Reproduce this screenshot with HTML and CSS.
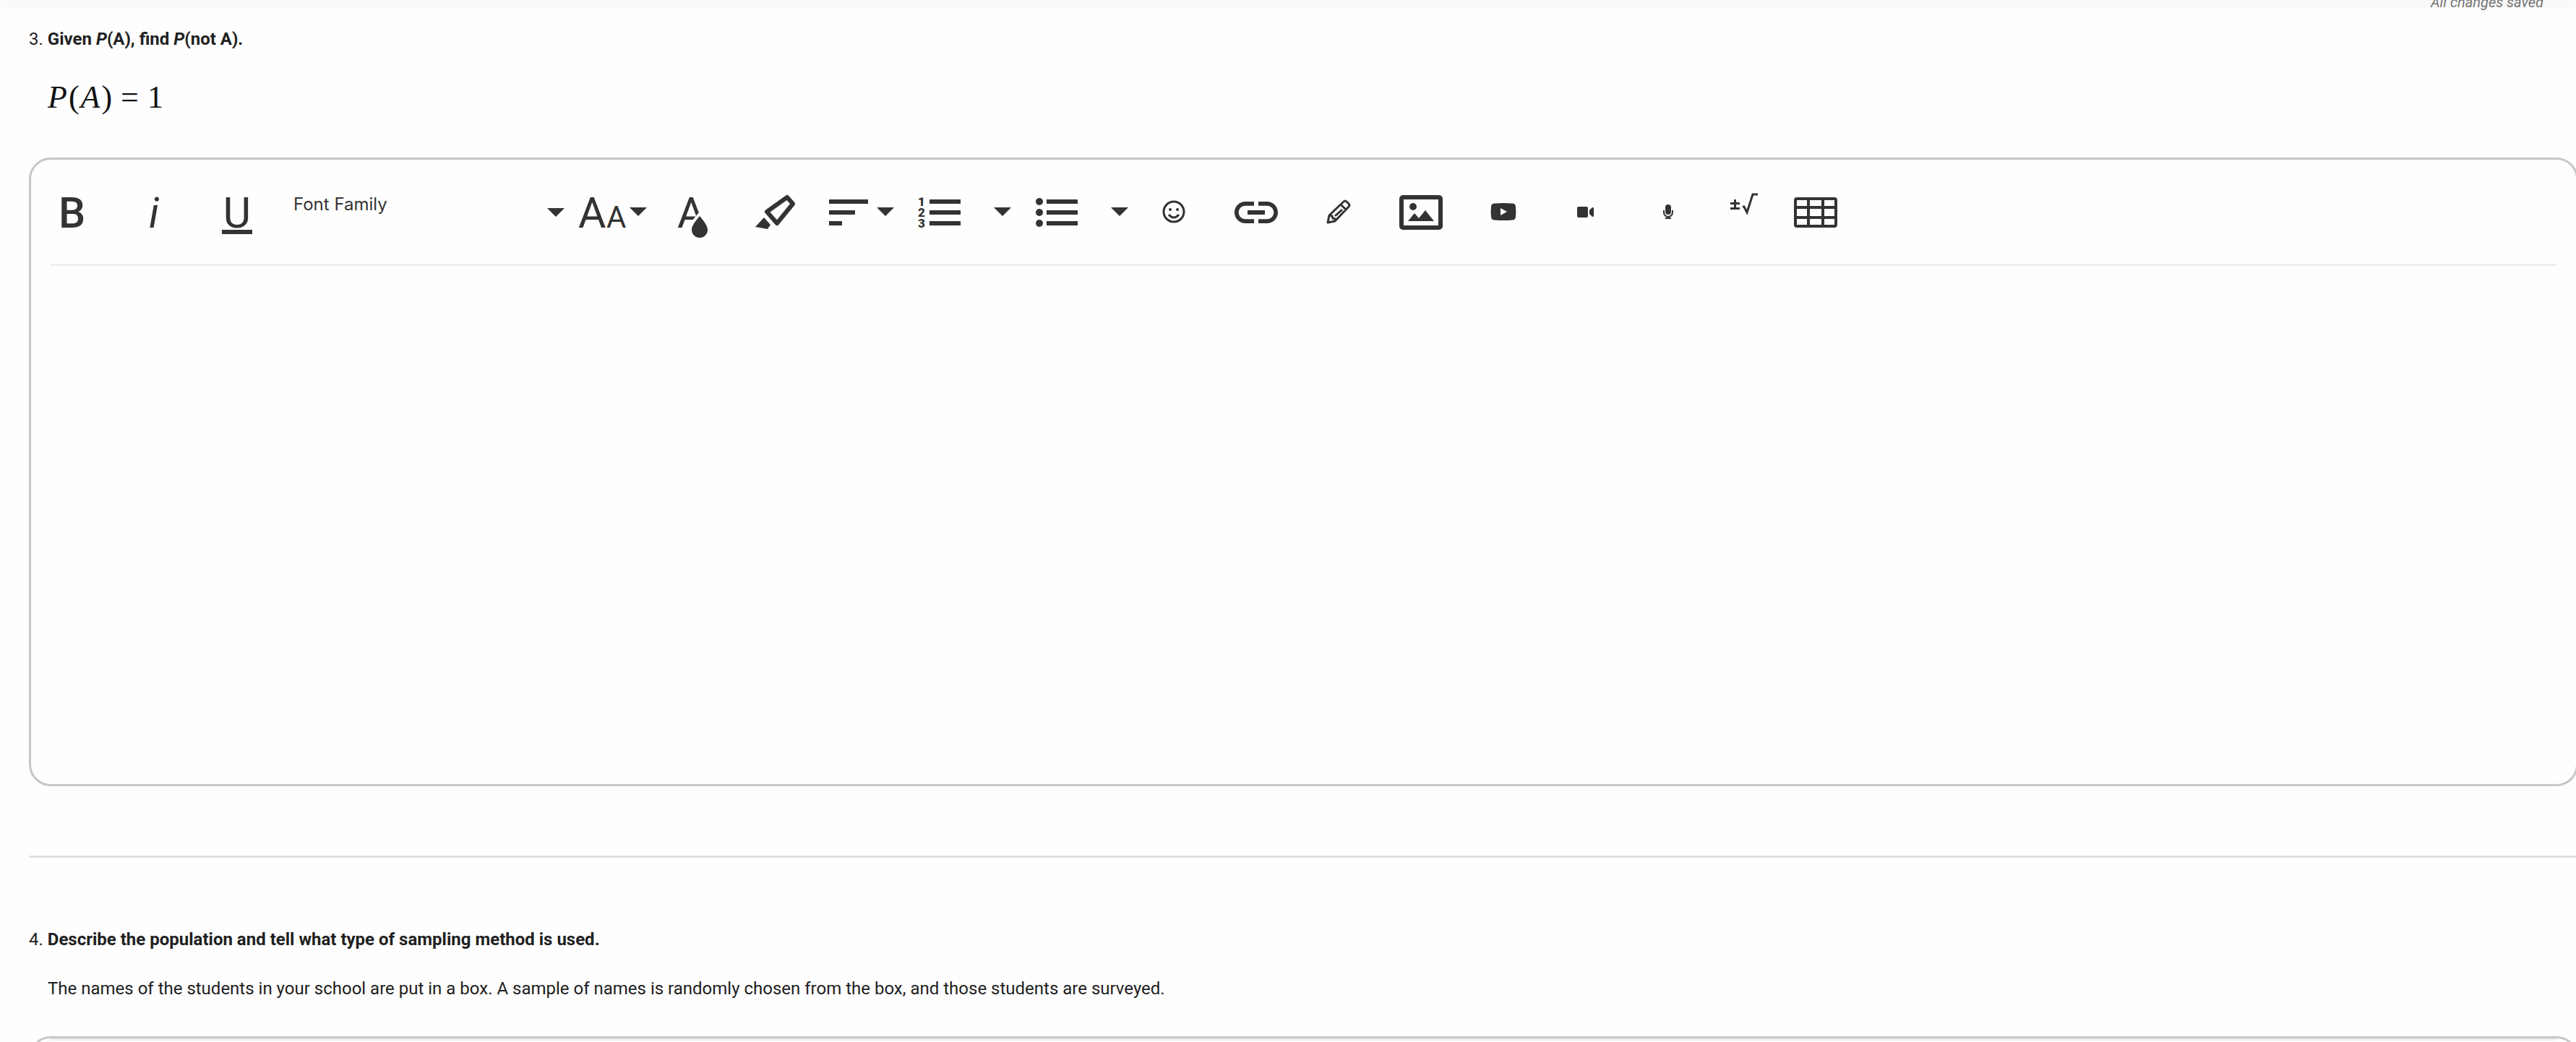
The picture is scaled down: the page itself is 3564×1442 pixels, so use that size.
FILE: index.html
```html
<!DOCTYPE html>
<html lang="en">
<head>
  <meta charset="UTF-8">
  <meta name="viewport" content="width=device-width, initial-scale=1">
  <title>Assignment</title>
  <link rel="stylesheet" href="styles.css">
</head>
<body>
<header class="topbar"></header>
<main class="page">
  <p class="status">All changes saved</p>

  <section class="question">
    <h2 class="prompt"><span class="number">3.</span> Given <em>P</em>(A), find <em>P</em>(not A).</h2>
    <p class="formula"><i>P</i><span>(</span><i>A</i><span>)</span><span class="equals">=</span><span>1</span></p>

    <div class="editor">
      <div class="toolbar">
        <button class="tool" type="button" aria-label="Bold">
          <svg width="72" height="72" viewBox="0 0 72 72"><text class="glyph strong" x="17" y="57">B</text></svg>
        </button>
        <button class="tool" type="button" aria-label="Italic">
          <svg width="72" height="72" viewBox="0 0 72 72"><text class="glyph slanted" x="28" y="57">i</text></svg>
        </button>
        <button class="tool" type="button" aria-label="Underline">
          <svg width="72" height="72" viewBox="0 0 72 72"><text class="glyph" x="36" y="57" text-anchor="middle">U</text><path d="M15 60h42v6H15z"/></svg>
        </button>
        <div class="font-picker">
          <select class="font-select" aria-label="Font Family">
            <option>Font Family</option>
            <option>Arial</option>
            <option>Georgia</option>
          </select>
          <svg class="caret" width="24" height="12" viewBox="0 0 24 12"><path d="M0 0h24L12 12z"/></svg>
        </div>
        <button class="tool" type="button" aria-label="Font size">
          <svg width="114" height="72" viewBox="0 0 114 72"><text class="glyph" x="13" y="57">A</text><text class="glyph small" x="52" y="57">A</text><path d="M84 29h24L96 41z"/></svg>
        </button>
        <button class="tool" type="button" aria-label="Text color">
          <svg width="114" height="72" viewBox="0 0 114 72"><text class="glyph" x="36" y="57">A</text><path class="drop" d="M67 41c-5 6-11 13-11 19a11 11 0 0 0 22 0c0-6-6-13-11-19z"/></svg>
        </button>
        <button class="tool" type="button" aria-label="Highlight">
          <svg width="114" height="72" viewBox="0 0 114 72"><path d="M30 56l12-13 9 10-4 6z"/><path class="line thick" d="M46 35l28-20 8 9-22 27z"/></svg>
        </button>
        <button class="tool" type="button" aria-label="Align">
          <svg width="114" height="72" viewBox="0 0 114 72"><path d="M18 18h54v6H18zM18 33h36v6H18zM18 48h18v6H18zM84 29h24L96 41z"/></svg>
        </button>
        <button class="tool wide" type="button" aria-label="Numbered list">
          <svg width="162" height="72" viewBox="0 0 162 72"><text class="digit" x="27" y="27">1</text><text class="digit" x="27" y="42">2</text><text class="digit" x="27" y="57">3</text><path d="M43 18h43v6H43zM43 33h43v6H43zM43 48h43v6H43zM132 29h24l-12 12z"/></svg>
        </button>
        <button class="tool wide" type="button" aria-label="Bulleted list">
          <svg width="162" height="72" viewBox="0 0 162 72"><circle cx="33" cy="21" r="5"/><circle cx="33" cy="36" r="5"/><circle cx="33" cy="51" r="5"/><path d="M43 18h43v6H43zM43 33h43v6H43zM43 48h43v6H43zM132 29h24l-12 12z"/></svg>
        </button>
        <button class="tool" type="button" aria-label="Emoji">
          <svg width="72" height="72" viewBox="0 0 72 72"><circle class="line" cx="36" cy="35" r="14"/><circle cx="31" cy="32" r="2"/><circle cx="41" cy="32" r="2"/><path class="line" d="M29 39q7 8 14 0"/></svg>
        </button>
        <button class="tool" type="button" aria-label="Link">
          <svg width="72" height="72" viewBox="0 0 24 24"><path d="M3.9 12c0-1.71 1.39-3.1 3.1-3.1h4V7H7c-2.76 0-5 2.24-5 5s2.24 5 5 5h4v-1.9H7c-1.71 0-3.1-1.39-3.1-3.1zM8 13h8v-2H8v2zm9-6h-4v1.9h4c1.71 0 3.1 1.39 3.1 3.1s-1.39 3.1-3.1 3.1h-4V17h4c2.76 0 5-2.24 5-5s-2.24-5-5-5z"/></svg>
        </button>
        <button class="tool" type="button" aria-label="Draw">
          <svg width="72" height="72" viewBox="0 0 72 72"><path class="line" d="M21 50l2-10 20-19q2-2 4 0l3 3q2 2 0 4L31 48zM39 25l7 7M24 40l3 1 1 3 3 1 1 2M31 41l10-9"/></svg>
        </button>
        <button class="tool" type="button" aria-label="Image">
          <svg width="72" height="72" viewBox="0 0 72 72"><rect class="line frame" x="9" y="15" width="54" height="42" rx="2"/><circle cx="25" cy="28" r="5"/><path d="M18 48l9-11 6 7 9-11 12 15z"/></svg>
        </button>
        <button class="tool" type="button" aria-label="YouTube">
          <svg width="72" height="72" viewBox="0 0 72 72"><path fill-rule="evenodd" d="M24 23.500q12-1 24 0 5 0 5 5 .8 6.500 0 13 0 5-5 5-12 1-24 0-5 0-5-5-.8-6.500 0-13 0-5 5-5zM32 30v10l9-5z"/></svg>
        </button>
        <button class="tool" type="button" aria-label="Video">
          <svg width="72" height="72" viewBox="0 0 72 72"><rect x="24" y="28" width="15" height="15" rx="2"/><path d="M41 33l4-4q2 0 2 1v11q0 1-2 1l-4-4z"/></svg>
        </button>
        <button class="tool" type="button" aria-label="Record audio">
          <svg width="72" height="72" viewBox="0 0 72 72"><rect x="32" y="25" width="8" height="14" rx="4"/><path class="line thin" d="M30 33v3a6 6 0 0 0 12 0v-3M36 42v3M32 44h8"/></svg>
        </button>
        <button class="tool math" type="button" aria-label="Equation">
          <svg width="90" height="72" viewBox="0 0 90 72"><path d="M34 18h3v4h5v3h-5v4h-3v-4h-5v-3h5zM29 29h13v3H29z"/><path class="line root" d="M46 28h2l4 8 8-25h7"/></svg>
        </button>
        <button class="tool" type="button" aria-label="Table">
          <svg width="72" height="72" viewBox="0 0 72 72"><path fill-rule="evenodd" d="M10 15h52q4 0 4 4v34q0 4-4 4H10q-4 0-4-4V19q0-4 4-4zM10 19v8h14v-8zM28 19v8h16v-8zM48 19v8h14v-8zM10 31v10h14v-10zM28 31v10h16v-10zM48 31v10h14v-10zM10 45v8h14v-8zM28 45v8h16v-8zM48 45v8h14v-8z"/></svg>
        </button>
      </div>
      <textarea class="answer" aria-label="Answer to question 3"></textarea>
    </div>
  </section>

  <hr class="divider">

  <section class="question">
    <h2 class="prompt"><span class="number">4.</span> Describe the population and tell what type of sampling method is used.</h2>
    <p class="details">The names of the students in your school are put in a box. A sample of names is randomly chosen from the box, and those students are surveyed.</p>
    <div class="editor">
      <textarea class="answer" aria-label="Answer to question 4"></textarea>
    </div>
  </section>
</main>
</body>
</html>
```
FILE: styles.css
```css
* {
  box-sizing: border-box;
}
body {
  margin: 0;
  height: 100vh;
  overflow: hidden;
  background: #fefefe;
  color: #212121;
  font-family: Roboto, sans-serif;
  font-size: 24px;
  line-height: 32px;
}
.topbar {
  height: 0;
  box-shadow: 0 0 18px 1px rgba(0, 0, 0, 0.25);
}
/* the answer boxes run slightly past the right edge of the window */
.page {
  margin: -13px -3px 0 40px;
}
.status {
  margin: 0 48px 0 0;
  color: #757575;
  font-size: 20px;
  font-style: italic;
  text-align: right;
}
.prompt {
  margin: 0;
  padding-top: 19px;
  font-size: 24px;
  font-weight: 700;
}
.number {
  font-weight: 400;
}
.formula {
  display: flex;
  gap: 2px;
  margin: 38px 0 56px 26px;
  color: #111;
  font-family: "Liberation Serif", serif;
  font-size: 44px;
  line-height: 54px;
}
.equals {
  margin: 0 10px;
}
.editor {
  border: 3px solid #c7c7c7;
  border-radius: 30px;
}
.toolbar {
  display: flex;
  align-items: center;
  height: 144px;
  padding-top: 2px;
}
.tool {
  display: flex;
  justify-content: center;
  width: 114px;
  padding: 0;
  border: 0;
  background: none;
  cursor: pointer;
}
.wide {
  width: 162px;
}
.math {
  width: 90px;
}
.toolbar svg {
  flex: none;
  fill: #333;
}
.toolbar .line {
  fill: none;
  stroke: #333;
  stroke-width: 3px;
  stroke-linejoin: round;
}
.toolbar .thick,
.toolbar .frame {
  stroke-width: 6px;
}
.toolbar .thin {
  stroke-width: 2px;
}
.toolbar .root {
  stroke-linejoin: miter;
}
.drop {
  stroke: #fefefe;
  stroke-width: 8px;
  paint-order: stroke;
}
.glyph {
  font-family: Roboto, sans-serif;
  font-size: 59px;
  font-weight: 400;
}
.strong {
  font-weight: 500;
}
.slanted {
  font-style: italic;
}
.small {
  font-size: 42px;
}
.digit {
  font-family: Roboto, sans-serif;
  font-size: 17px;
  font-weight: 900;
}
.font-picker {
  display: flex;
  align-items: center;
  width: 402px;
  padding-right: 6px;
}
.font-select {
  flex: 1;
  height: 72px;
  padding: 0 0 24px 21px;
  border: 0;
  appearance: none;
  background: none;
  color: #333;
  font-family: Inter, sans-serif;
  font-size: 24px;
}
.answer {
  display: block;
  width: calc(100% - 54px);
  height: 720px;
  margin: 0 27px;
  padding: 24px 0;
  border: 0;
  border-top: 3px solid #eee;
  background: none;
  font: inherit;
  resize: none;
  outline: none;
}
.divider {
  margin: 96px 0 78px;
  border: 0;
  border-top: 3px solid #e0e0e0;
}
.details {
  margin: 36px 0 50px 26px;
}
```
